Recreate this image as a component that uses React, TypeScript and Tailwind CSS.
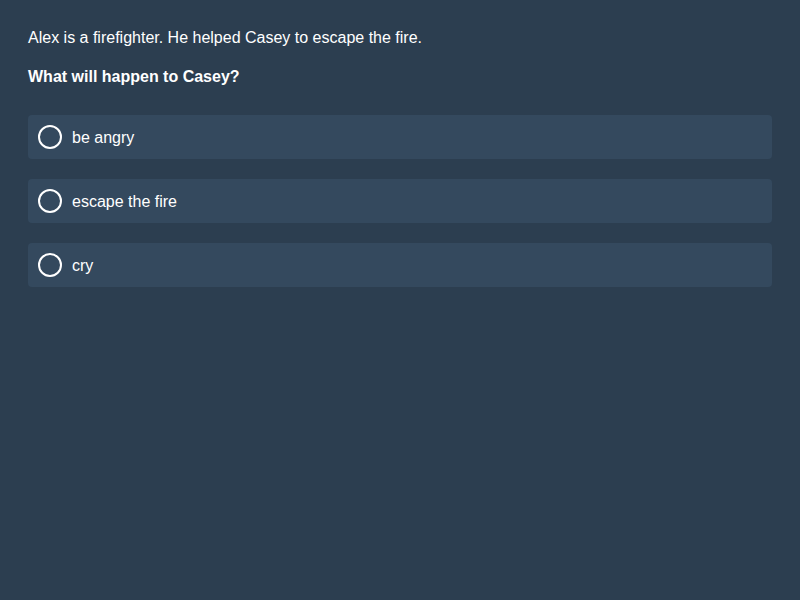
const options = ['be angry', 'escape the fire', 'cry'];

export default function App() {
  return (
    <div className="min-h-[600px] w-[800px] bg-[#2c3e50] p-[28px] text-white" style={{ fontFamily: '"Liberation Sans", Arial, sans-serif' }}>
      <p className="text-[16px] leading-[20px]">Alex is a firefighter. He helped Casey to escape the fire.</p>
      <p className="mt-[19px] text-[16px] font-bold leading-[20px]">What will happen to Casey?</p>
      <div className="mt-[28px] flex flex-col gap-[20px]">
        {options.map((o) => (
          <label key={o} className="flex h-[44px] cursor-pointer items-center gap-[10px] rounded-[4px] bg-[#34495e] px-[10px]">
            <span className="h-[24px] w-[24px] rounded-full border-2 border-white" />
            <span className="mt-[2px] text-[16px] leading-[20px]">{o}</span>
          </label>
        ))}
      </div>
    </div>
  );
}
